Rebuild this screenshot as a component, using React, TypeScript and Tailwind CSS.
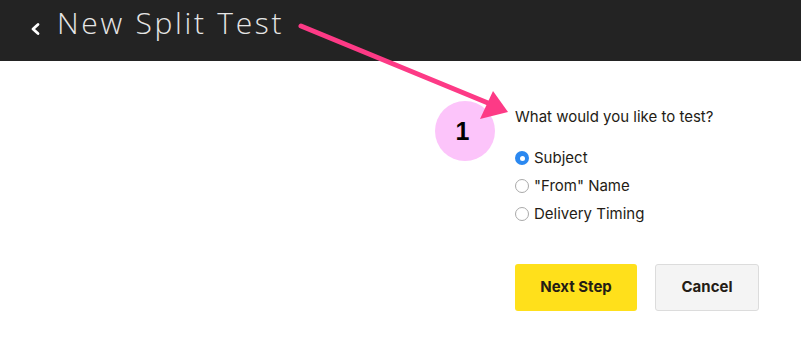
import React from "react";

function Radio({ label, checked }: { label: string; checked?: boolean }) {
  return (
    <label className="flex items-center h-[28px] gap-[5px] text-[15px] text-[#241c15]">
      {checked ? (
        <span className="w-[14px] h-[14px] rounded-full bg-[#2b88f0] flex items-center justify-center">
          <span className="w-[5px] h-[5px] rounded-full bg-white" />
        </span>
      ) : (
        <span className="w-[14px] h-[14px] rounded-full border border-[#a9a9a9] bg-white" />
      )}
      <span>{label}</span>
    </label>
  );
}

export default function App() {
  return (
    <div className="relative w-[801px] h-[355px] bg-white overflow-hidden" style={{ fontFamily: "Inter, 'Noto Sans', sans-serif" }}>
      <header className="h-[61px] bg-[#232323] flex items-start pl-[30px] pt-[3px] gap-[16px]">
        <svg width="11" height="14" viewBox="0 0 11 14" className="mt-[19px]">
          <path d="M8 2.5 L3 7 L8 11.5" stroke="#ffffff" strokeWidth="2.8" fill="none" strokeLinecap="round" strokeLinejoin="round" />
        </svg>
        <h1 className="text-[30px] font-light text-[#e6e6e6] tracking-[2.7px] leading-[40px]" style={{ fontFamily: "'Open Sans', Lato, sans-serif" }}>
          New Split Test
        </h1>
      </header>

      <main className="pl-[515px] pt-[45px]">
        <p className="text-[15px] text-[#241c15] h-[22px] leading-[22px]">What would you like to test?</p>
        <div className="mt-[16px] flex flex-col">
          <Radio label="Subject" checked />
          <Radio label={'"From" Name'} />
          <Radio label="Delivery Timing" />
        </div>
        <div className="mt-[36px] flex gap-[18px]">
          <button className="w-[122px] h-[47px] rounded-[3px] bg-[#ffe01b] text-[15px] font-bold text-[#241c15]">Next Step</button>
          <button className="w-[104px] h-[47px] rounded-[3px] bg-[#f4f4f4] border border-[#dcdcdc] text-[15px] font-bold text-[#241c15]">Cancel</button>
        </div>
      </main>

      <div className="absolute left-[435px] top-[101px] w-[60px] h-[60px] rounded-full bg-[#fcc4fa] flex items-center justify-center">
        <span className="text-[25px] font-bold text-black mr-[5px] mt-[2px]" style={{ fontFamily: "'Liberation Sans', Arial, sans-serif" }}>1</span>
      </div>

      <svg className="absolute left-0 top-0 pointer-events-none" width="801" height="355">
        <line x1="301" y1="26" x2="488" y2="103" stroke="#fd3a86" strokeWidth="5" strokeLinecap="round" />
        <polygon points="493,91 508,112 480,119" fill="#fd3a86" />
      </svg>
    </div>
  );
}
